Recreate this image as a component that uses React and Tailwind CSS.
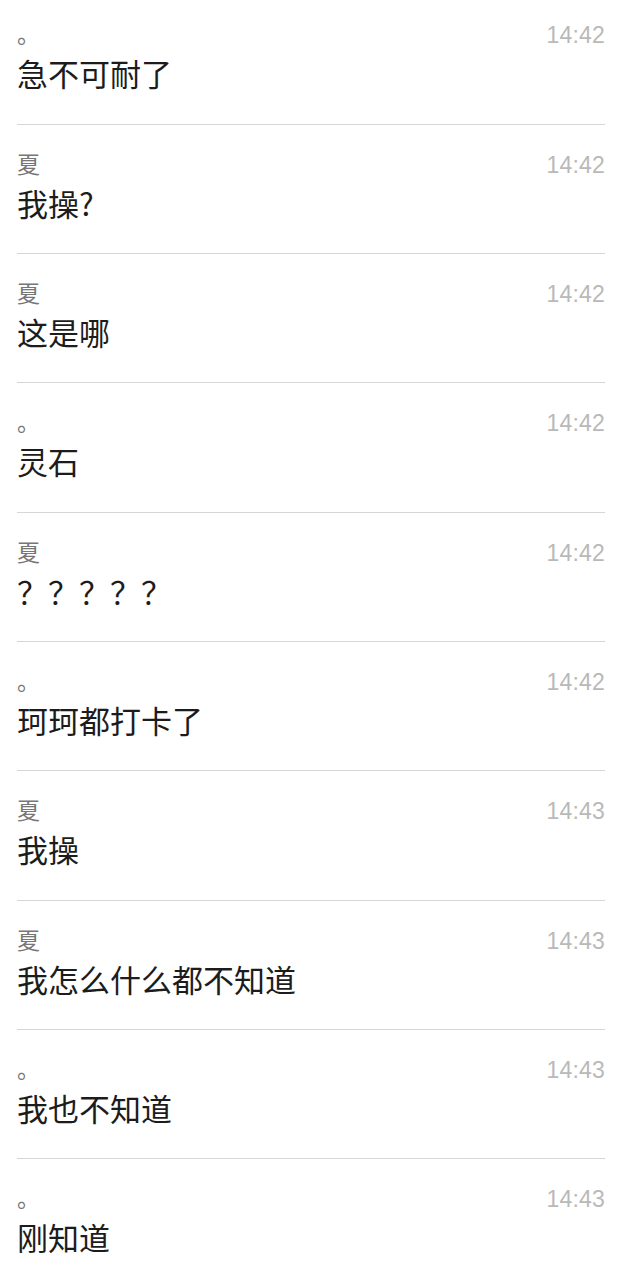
const messages = [
  { name: "。", text: "急不可耐了", time: "14:42" },
  { name: "夏", text: "我操?", time: "14:42" },
  { name: "夏", text: "这是哪", time: "14:42" },
  { name: "。", text: "灵石", time: "14:42" },
  { name: "夏", text: "？？？？？", time: "14:42" },
  { name: "。", text: "珂珂都打卡了", time: "14:42" },
  { name: "夏", text: "我操", time: "14:43" },
  { name: "夏", text: "我怎么什么都不知道", time: "14:43" },
  { name: "。", text: "我也不知道", time: "14:43" },
  { name: "。", text: "刚知道", time: "14:43" },
];

const MessageRow = ({ name, text, time, last }) => {
  return (
    <div
      className={
        "h-[129.33px] shrink-0 flex justify-between items-start pt-[25px] " +
        (last ? "" : "border-b border-[#d6d6d6]")
      }
    >
      <div className="flex flex-col">
        <span className="text-[23px] leading-[26px] text-[#777777]">{name}</span>
        <span className="mt-[9px] text-[31px] leading-[36px] text-[#1c1c1c] whitespace-nowrap">
          {text}
        </span>
      </div>
      <span
        className="mt-[3px] text-[23px] leading-[24px] text-[#b9b9b9] tracking-[0.2px]"
        style={{ fontFamily: '"Liberation Sans", Arial, sans-serif' }}
      >
        {time}
      </span>
    </div>
  );
};

export default function App() {
  return (
    <div
      className="w-[637px] h-[1280px] overflow-hidden bg-white"
      style={{ fontFamily: '"Noto Sans CJK SC", "Noto Sans", sans-serif' }}
    >
      <div className="mt-[-4.7px] ml-[17px] mr-[32px] flex flex-col">
        {messages.map((m, i) => (
          <MessageRow key={i} {...m} last={i === messages.length - 1} />
        ))}
      </div>
    </div>
  );
}
